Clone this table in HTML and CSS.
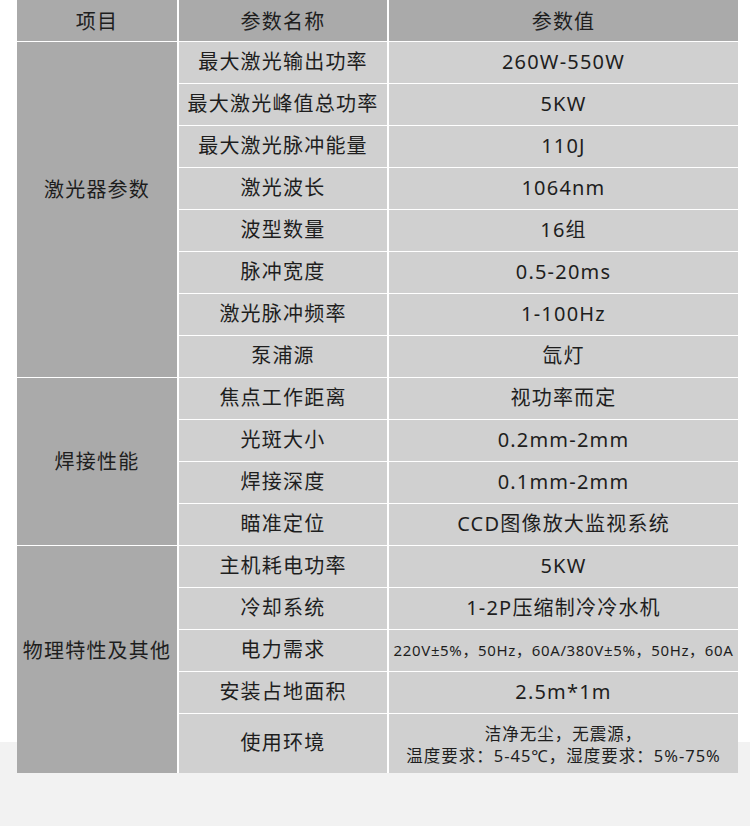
FILE: index.html
```html
<!DOCTYPE html>
<html lang="zh-CN">
<head>
<meta charset="utf-8">
<title>参数</title>
<link rel="stylesheet" href="styles.css">
</head>
<body>
<div class="spec">
  <div class="cell head">项目</div>
  <div class="cell head">参数名称</div>
  <div class="cell head">参数值</div>

  <div class="cell group g1">激光器参数</div>
  <div class="cell name">最大激光输出功率</div><div class="cell val">260W-550W</div>
  <div class="cell name">最大激光峰值总功率</div><div class="cell val">5KW</div>
  <div class="cell name">最大激光脉冲能量</div><div class="cell val">110J</div>
  <div class="cell name">激光波长</div><div class="cell val">1064nm</div>
  <div class="cell name">波型数量</div><div class="cell val">16组</div>
  <div class="cell name">脉冲宽度</div><div class="cell val">0.5-20ms</div>
  <div class="cell name">激光脉冲频率</div><div class="cell val">1-100Hz</div>
  <div class="cell name">泵浦源</div><div class="cell val">氙灯</div>

  <div class="cell group g2">焊接性能</div>
  <div class="cell name">焦点工作距离</div><div class="cell val">视功率而定</div>
  <div class="cell name">光斑大小</div><div class="cell val">0.2mm-2mm</div>
  <div class="cell name">焊接深度</div><div class="cell val">0.1mm-2mm</div>
  <div class="cell name">瞄准定位</div><div class="cell val">CCD图像放大监视系统</div>

  <div class="cell group g3">物理特性及其他</div>
  <div class="cell name">主机耗电功率</div><div class="cell val">5KW</div>
  <div class="cell name">冷却系统</div><div class="cell val">1-2P压缩制冷冷水机</div>
  <div class="cell name">电力需求</div><div class="cell val small">220V±5%，50Hz，60A/380V±5%，50Hz，60A</div>
  <div class="cell name">安装占地面积</div><div class="cell val">2.5m*1m</div>
  <div class="cell name">使用环境</div><div class="cell val env"><span>洁净无尘，无震源，</span><span>温度要求：5-45℃，湿度要求：5%-75%</span></div>
</div>
</body>
</html>
```

FILE: styles.css
```css
html, body {
  margin: 0;
  padding: 0;
}
body {
  width: 750px;
  height: 826px;
  overflow: hidden;
  background: linear-gradient(#ffffff 0, #ffffff 742px, #f2f2f2 742px);
  font-family: "Noto Sans", "Noto Sans CJK SC", sans-serif;
  color: #1e1e1e;
}
.spec {
  margin-left: 17px;
  width: 721px;
  display: grid;
  grid-template-columns: 160px 208px 349px;
  grid-template-rows: 41px repeat(16, 41px) 59px;
  column-gap: 2px;
  row-gap: 1px;
  background: #ffffff;
}
.cell {
  display: flex;
  align-items: center;
  justify-content: center;
  text-align: center;
  font-size: 20px;
  letter-spacing: 1.2px;
  line-height: 24px;
  white-space: nowrap;
  padding-bottom: 2px;
  box-sizing: border-box;
}
.head {
  padding-bottom: 0;
  padding-top: 2px;
}
.head, .group {
  background: #aaaaaa;
}
.name, .val {
  background: #d0d0d0;
}
.g1 { grid-row: 2 / span 8; padding-bottom: 39px; }
.g2 { grid-row: 10 / span 4; padding-bottom: 0; }
.g3 { grid-row: 14 / span 5; padding-bottom: 17px; }
.group { grid-column: 1; }
.small {
  font-size: 15px;
  letter-spacing: 0.65px;
}
.env {
  flex-direction: column;
  font-size: 16.5px;
  letter-spacing: 1px;
  line-height: 22px;
  padding-bottom: 0;
  padding-top: 2px;
}
```
